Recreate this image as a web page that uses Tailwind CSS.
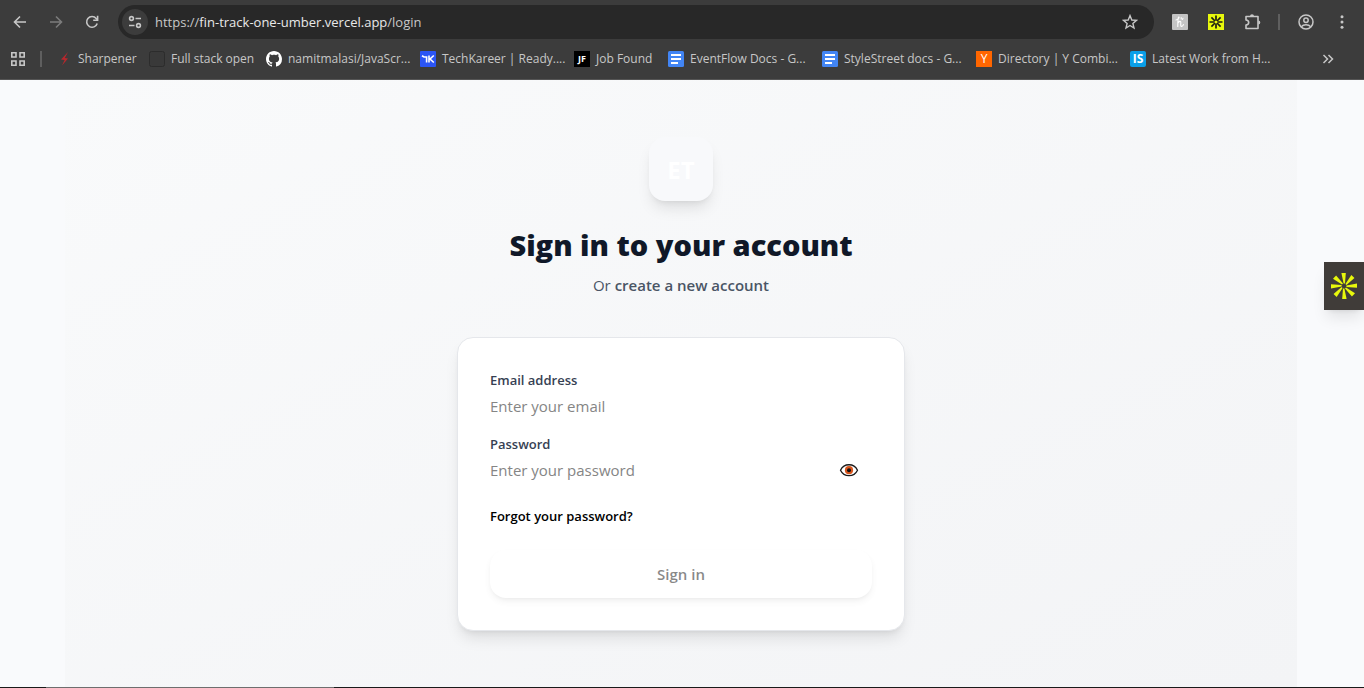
<!DOCTYPE html>
<html lang="en">

<head>
    <meta charset="UTF-8">
    <meta name="viewport" content="width=device-width, initial-scale=1.0">
    <script src="https://cdn.jsdelivr.net/npm/@tailwindcss/browser@4"></script>
    <title>Sign in</title>
</head>

<body class="min-h-screen flex flex-col bg-[#f9fafc] font-['Segoe_UI','Open_Sans','Noto_Sans',sans-serif]">

    <!-- browser bar -->
    <header class="bg-[#3c3c3c] text-[#c7c7c7] border-b border-[#555555]">
        <div class="flex items-center h-11 pl-3 pr-3.5">
            <button class="w-4 h-4" aria-label="Back">
                <svg class="w-4 h-4" viewBox="0 0 16 16" fill="none" stroke="currentColor" stroke-width="1.6"><path d="M14 8H3M8 2.5L2.5 8L8 13.5" /></svg>
            </button>
            <button class="w-4 h-4 ml-5 text-[#7c7c7c]" aria-label="Forward">
                <svg class="w-4 h-4" viewBox="0 0 16 16" fill="none" stroke="currentColor" stroke-width="1.6"><path d="M2 8H13M8 2.5L13.5 8L8 13.5" /></svg>
            </button>
            <button class="w-4 h-4 ml-5" aria-label="Reload">
                <svg class="w-4 h-4" viewBox="0 0 16 16" fill="none" stroke="currentColor" stroke-width="1.6"><path d="M13.2 9.5A5.4 5.4 0 1 1 12.2 4.4L13.5 6" /><path d="M13.6 1.8V6.2H9.2" /></svg>
            </button>
            <div class="flex-1 flex items-center h-[34px] ml-[18px] pl-1 pr-4 rounded-full bg-[#282828]">
                <button class="w-[26px] h-[26px] rounded-full bg-[#3c3c3c] flex items-center justify-center" aria-label="Site information">
                    <svg class="w-4 h-4" viewBox="0 0 16 16" fill="none" stroke="currentColor" stroke-width="1.6"><circle cx="4.5" cy="4.5" r="1.9" /><path d="M8.5 4.5H14M2 11.5H7.5" /><circle cx="11.5" cy="11.5" r="1.9" /></svg>
                </button>
                <div class="flex-1 ml-[7px] text-[13px] leading-5 text-[#c7c7c7]">https://<span class="text-[#e8e8e8]">fin-track-one-umber.vercel.app</span>/login</div>
                <button aria-label="Bookmark this tab">
                    <svg class="w-4 h-4" viewBox="0 0 16 16" fill="none" stroke="currentColor" stroke-width="1.4"><path d="M8 1.6L9.8 6L14.5 6.4L10.9 9.4L12 14L8 11.5L4 14L5.1 9.4L1.5 6.4L6.2 6Z" /></svg>
                </button>
            </div>
            <div class="flex items-center ml-[18px]">
                <button aria-label="Honey">
                    <svg class="w-4 h-4" viewBox="0 0 16 16"><rect width="16" height="16" rx="1" fill="#c4c4c4" /><path d="M4 6C6 5.4 7.6 4 7 3.1C6.2 2.4 5.8 5 5.8 12.5M5.8 9.2C7 6.8 9 6.8 8.8 8.8C8.6 11 8.6 12.8 10 12.3C10.8 12 11.2 11.2 11.4 10.6M9.2 3.6V5M11 4.2L10.6 5.4" fill="none" stroke="#fff" stroke-width="1.1" stroke-linecap="round" /></svg>
                </button>
                <button class="ml-5" aria-label="Spark">
                    <svg class="w-4 h-4" viewBox="0 0 16 16"><rect width="16" height="16" fill="#e8f80c" /><path d="M8 1.5V6.5M8 9.5V14.5M1.5 8H6.5M9.5 8H14.5M3.4 3.4L7 7M9 9L12.6 12.6M12.6 3.4L9 7M7 9L3.4 12.6" stroke="#1c1c14" stroke-width="1.7" /></svg>
                </button>
                <button class="ml-5" aria-label="Extensions">
                    <svg class="w-[18px] h-[18px]" viewBox="0 0 18 18" fill="none" stroke="currentColor" stroke-width="1.6" stroke-linejoin="round"><path d="M2 3.5H14V15.5H2V12C5.6 11.4 5.6 7.4 2 7Z" /><path d="M6 3.2A2 2 0 0 1 10 3.2ZM14.3 7.5A2 2 0 0 1 14.3 11.5Z" fill="currentColor" stroke="none" /></svg>
                </button>
                <div class="w-0.5 h-4 ml-4 bg-[#5f5f5f]"></div>
                <button class="ml-[18px]" aria-label="Profile">
                    <svg class="w-4 h-4" viewBox="0 0 16 16" fill="none" stroke="currentColor" stroke-width="1.5"><circle cx="8" cy="8" r="7" /><circle cx="8" cy="6.3" r="2.2" /><path d="M3.3 12.8C5.5 10.2 10.5 10.2 12.7 12.8" /></svg>
                </button>
                <button class="ml-5" aria-label="Menu">
                    <svg class="w-4 h-4" viewBox="0 0 16 16" fill="currentColor"><circle cx="8" cy="2.8" r="1.5" /><circle cx="8" cy="8" r="1.5" /><circle cx="8" cy="13.2" r="1.5" /></svg>
                </button>
            </div>
        </div>

        <nav class="flex items-center h-[35px] pb-[5px] pl-[10px] pr-7 text-[12px] leading-4 whitespace-nowrap">
            <button aria-label="Apps">
                <svg class="w-4 h-4" viewBox="0 0 16 16" fill="none" stroke="currentColor" stroke-width="1.6"><path d="M1.8 1.8H6V6H1.8ZM10 1.8H14.2V6H10ZM1.8 10H6V14.2H1.8ZM10 10H14.2V14.2H10Z" /></svg>
            </button>
            <div class="w-0.5 h-4 ml-[14px] mr-[15px] bg-[#5f5f5f]"></div>
            <a href="#" class="flex items-center gap-[5px] w-[92px]">
                <svg class="w-4 h-4" viewBox="0 0 16 16"><path d="M11 1L4 8.4L7.6 8.9L5 14.5L11 7.6L7.8 7Z" fill="#b8282d" /></svg>
                <span>Sharpener</span>
            </a>
            <a href="#" class="flex items-center gap-1.5 w-[117px]">
                <svg class="w-4 h-4" viewBox="0 0 16 16"><rect x="0.5" y="0.5" width="15" height="15" rx="2" fill="#393939" stroke="#2c2c2c" /></svg>
                <span>Full stack open</span>
            </a>
            <a href="#" class="flex items-center gap-1.5 w-[154px]">
                <svg class="w-4 h-4" viewBox="0 0 16 16" fill="#fff"><path d="M8 0C3.58 0 0 3.58 0 8c0 3.54 2.29 6.53 5.47 7.59.4.07.55-.17.55-.38 0-.19-.01-.82-.01-1.49-2.01.37-2.53-.49-2.69-.94-.09-.23-.48-.94-.82-1.13-.28-.15-.68-.52-.01-.53.63-.01 1.08.58 1.23.82.72 1.21 1.87.87 2.33.66.07-.52.28-.87.51-1.07-1.78-.2-3.64-.89-3.64-3.95 0-.87.31-1.59.82-2.15-.08-.2-.36-1.02.08-2.12 0 0 .67-.21 2.2.82.64-.18 1.32-.27 2-.27s1.36.09 2 .27c1.53-1.04 2.2-.82 2.2-.82.44 1.1.16 1.92.08 2.12.51.56.82 1.27.82 2.15 0 3.07-1.87 3.75-3.65 3.95.29.25.54.73.54 1.48 0 1.07-.01 1.93-.01 2.2 0 .21.15.46.55.38A8.01 8.01 0 0 0 16 8c0-4.42-3.58-8-8-8z" /></svg>
                <span>namitmalasi/JavaScr...</span>
            </a>
            <a href="#" class="flex items-center gap-1.5 w-[154px]">
                <svg class="w-4 h-4" viewBox="0 0 16 16"><rect width="16" height="16" rx="1" fill="#2b55f5" /><path d="M2 4.8L4 6H6.6V11.5M9 4.5V11.5M13.8 4.5L10 8L13.8 11.5" fill="none" stroke="#fff" stroke-width="1.6" /></svg>
                <span>TechKareer | Ready....</span>
            </a>
            <a href="#" class="flex items-center gap-1.5 w-[94px]">
                <span class="w-4 h-4 bg-black text-white text-[9px] leading-4 font-bold text-center">JF</span>
                <span>Job Found</span>
            </a>
            <a href="#" class="flex items-center gap-1.5 w-[154px]">
                <svg class="w-4 h-4" viewBox="0 0 16 16"><rect width="16" height="16" rx="1.5" fill="#4285f4" /><path d="M3 4H13M3 8H13M3 12H10" stroke="#fff" stroke-width="1.8" /></svg>
                <span>EventFlow Docs - G...</span>
            </a>
            <a href="#" class="flex items-center gap-1.5 w-[154px]">
                <svg class="w-4 h-4" viewBox="0 0 16 16"><rect width="16" height="16" rx="1.5" fill="#4285f4" /><path d="M3 4H13M3 8H13M3 12H10" stroke="#fff" stroke-width="1.8" /></svg>
                <span>StyleStreet docs - G...</span>
            </a>
            <a href="#" class="flex items-center gap-1.5 w-[154px]">
                <span class="w-4 h-4 bg-[#ff6600] text-white text-[12px] leading-4 text-center">Y</span>
                <span>Directory | Y Combi...</span>
            </a>
            <a href="#" class="flex items-center gap-1.5 w-[154px]">
                <span class="w-4 h-4 rounded-xs bg-[#0a9fe8] text-white text-[12px] leading-4 font-bold text-center">IS</span>
                <span>Latest Work from H...</span>
            </a>
            <button class="ml-auto" aria-label="More bookmarks">
                <svg class="w-4 h-4" viewBox="0 0 16 16" fill="none" stroke="currentColor" stroke-width="1.5"><path d="M3.5 4L7.5 8L3.5 12M8.5 4L12.5 8L8.5 12" /></svg>
            </button>
        </nav>
    </header>

    <!-- login page -->
    <main class="flex-1 flex flex-col pr-0.5">
        <div class="flex-1 w-full max-w-[1232px] mx-auto pt-[57px] pb-14 flex flex-col items-center bg-linear-to-br from-[#f9fafb] to-[#f3f4f6]">
            <div class="w-16 h-16 pt-0.5 rounded-2xl bg-[#f8f9fb] shadow-lg flex items-center justify-center text-white text-2xl font-bold">ET</div>
            <h1 class="mt-6 text-[29px] leading-10 font-extrabold text-gray-900">Sign in to your account</h1>
            <p class="mt-2 text-[15px] leading-6 text-gray-600">Or <a href="#" class="font-semibold">create a new account</a></p>

            <form class="w-full max-w-md mt-10 p-8 rounded-2xl border border-gray-200 bg-white shadow-lg">
                <label for="email" class="block text-[13px] leading-5 font-semibold text-gray-700">Email address</label>
                <input id="email" type="email" placeholder="Enter your email" class="block w-full mt-1 h-6 text-[15px] placeholder:text-[#858585]">
                <label for="password" class="block mt-4 text-[13px] leading-5 font-semibold text-gray-700">Password</label>
                <div class="flex items-center mt-1 pr-3">
                    <input id="password" type="password" placeholder="Enter your password" class="flex-1 h-6 text-[15px] placeholder:text-[#858585]">
                    <button type="button" aria-label="Show password">
                        <svg class="w-[22px] h-[22px]" viewBox="0 0 22 22"><path d="M2.5 11.2C6 3.9 16 3.9 19.5 11.2C16 18.5 6 18.5 2.5 11.2Z" fill="#fff" stroke="#1a1a1a" stroke-width="1.3" /><circle cx="11" cy="11.2" r="4.1" fill="#d8551c" /><circle cx="11" cy="11.2" r="2" fill="#111" /></svg>
                    </button>
                </div>
                <a href="#" class="block mt-6 text-[13px] leading-5 font-semibold text-black">Forgot your password?</a>
                <button type="submit" class="block w-full h-12 mt-6 rounded-2xl shadow-md opacity-50 text-[15px] font-semibold text-[#111]">Sign in</button>
            </form>
        </div>
    </main>

    <!-- window bottom edge -->
    <div class="flex h-px bg-[#1a1a1a]">
        <div class="w-72 ml-[46px] bg-[#6e6e6e]"></div>
    </div>

    <!-- extension tab on the window edge -->
    <button class="fixed right-0 top-[262px] w-10 h-12 bg-[#403c39] shadow-lg flex items-center justify-center" aria-label="Open side panel">
        <svg class="w-7 h-7" viewBox="0 0 28 28" fill="#e8f80c">
            <g id="ray"><path d="M11.4 1H15.8L15 11.6H13.6Z" /></g>
            <use href="#ray" transform="rotate(45 14 14)" />
            <use href="#ray" transform="rotate(90 14 14)" />
            <use href="#ray" transform="rotate(135 14 14)" />
            <use href="#ray" transform="rotate(180 14 14)" />
            <use href="#ray" transform="rotate(225 14 14)" />
            <use href="#ray" transform="rotate(270 14 14)" />
            <use href="#ray" transform="rotate(315 14 14)" />
        </svg>
    </button>
</body>

</html>
